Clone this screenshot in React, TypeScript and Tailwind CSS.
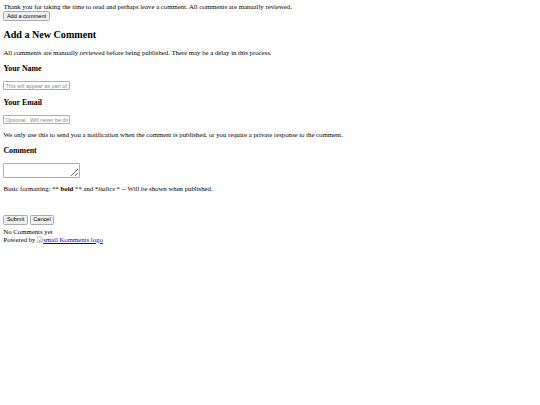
import React from "react";

const serif = { fontFamily: '"Liberation Serif", "Times New Roman", serif' };

function Btn({ children }: { children: React.ReactNode }) {
  return (
    <button
      type="button"
      className="inline-block bg-[#efefef] border border-[#ababab] rounded-[1.5px] px-[2.5px] py-[0.6px] text-[5.6px] leading-[6.6px] text-black font-['Liberation_Sans',Arial,sans-serif]"
    >
      {children}
    </button>
  );
}

function BrokenImg() {
  return (
    <svg width="6" height="7" viewBox="0 0 12 14" className="inline-block align-[-1px]">
      <path d="M1 1h7l3 3v9H1z" fill="#fff" stroke="#9a9a9a" strokeWidth="1" />
      <path d="M2.5 11l2.5-3 2 2 1.5-1.5 1.5 2.5z" fill="#4caf50" />
      <circle cx="8" cy="6" r="1.2" fill="#e53935" />
    </svg>
  );
}

export default function App() {
  return (
    <div className="bg-white min-h-[405px] w-[540px] p-[3.4px] text-black text-[6.75px] leading-[1.15]" style={serif}>
      <div>Thank you for taking the time to read and perhaps leave a comment. All comments are manually reviewed.</div>
      <div>
        <Btn>Add a comment</Btn>
      </div>
      <h2 className="text-[10.1px] font-bold leading-[1.15] mt-[7.8px] mb-[8.4px]">Add a New Comment</h2>
      <p className="my-[6.75px]">All comments are manually reviewed before being published. There may be a delay in this process.</p>
      <h3 className="text-[7.9px] font-bold leading-[1.15] my-[7.9px]">Your Name</h3>
      <input
        type="text"
        placeholder="This will appear as part of the comment."
        className="block w-[67px] h-[8.6px] border border-[#b0b0b0] rounded-[1px] px-[1px] text-[5.4px] font-['Liberation_Sans',Arial,sans-serif] placeholder:text-[#8a8a8a] outline-none"
      />
      <h3 className="text-[7.9px] font-bold leading-[1.15] mt-[8.4px] mb-[7.9px]">Your Email</h3>
      <input
        type="text"
        placeholder="Optional.  Will never be displayed."
        className="block w-[67px] h-[8.6px] border border-[#b0b0b0] rounded-[1px] px-[1px] text-[5.4px] font-['Liberation_Sans',Arial,sans-serif] placeholder:text-[#8a8a8a] outline-none"
      />
      <p className="my-[6.75px]">
        We only use this to send you a notification when the comment is published, or you require a private response to the comment.
      </p>
      <h3 className="text-[7.9px] font-bold leading-[1.15] my-[7.9px]">Comment</h3>
      <textarea className="block w-[77px] h-[15px] border border-[#b0b0b0] rounded-[1px] resize outline-none text-[6px]" />
      <p className="my-[6.75px]">
        Basic formatting: ** <b>bold</b> ** and *<i>italics</i> * -- Will be shown when published.
      </p>
      <div className="mt-[22px] flex gap-[2px]">
        <Btn>Submit</Btn>
        <Btn>Cancel</Btn>
      </div>
      <div className="mt-[3.5px]">No Comments yet</div>
      <div>
        Powered by{" "}
        <a href="#" className="text-[#0000ee] underline">
          <BrokenImg />small Komments logo
        </a>
      </div>
    </div>
  );
}
